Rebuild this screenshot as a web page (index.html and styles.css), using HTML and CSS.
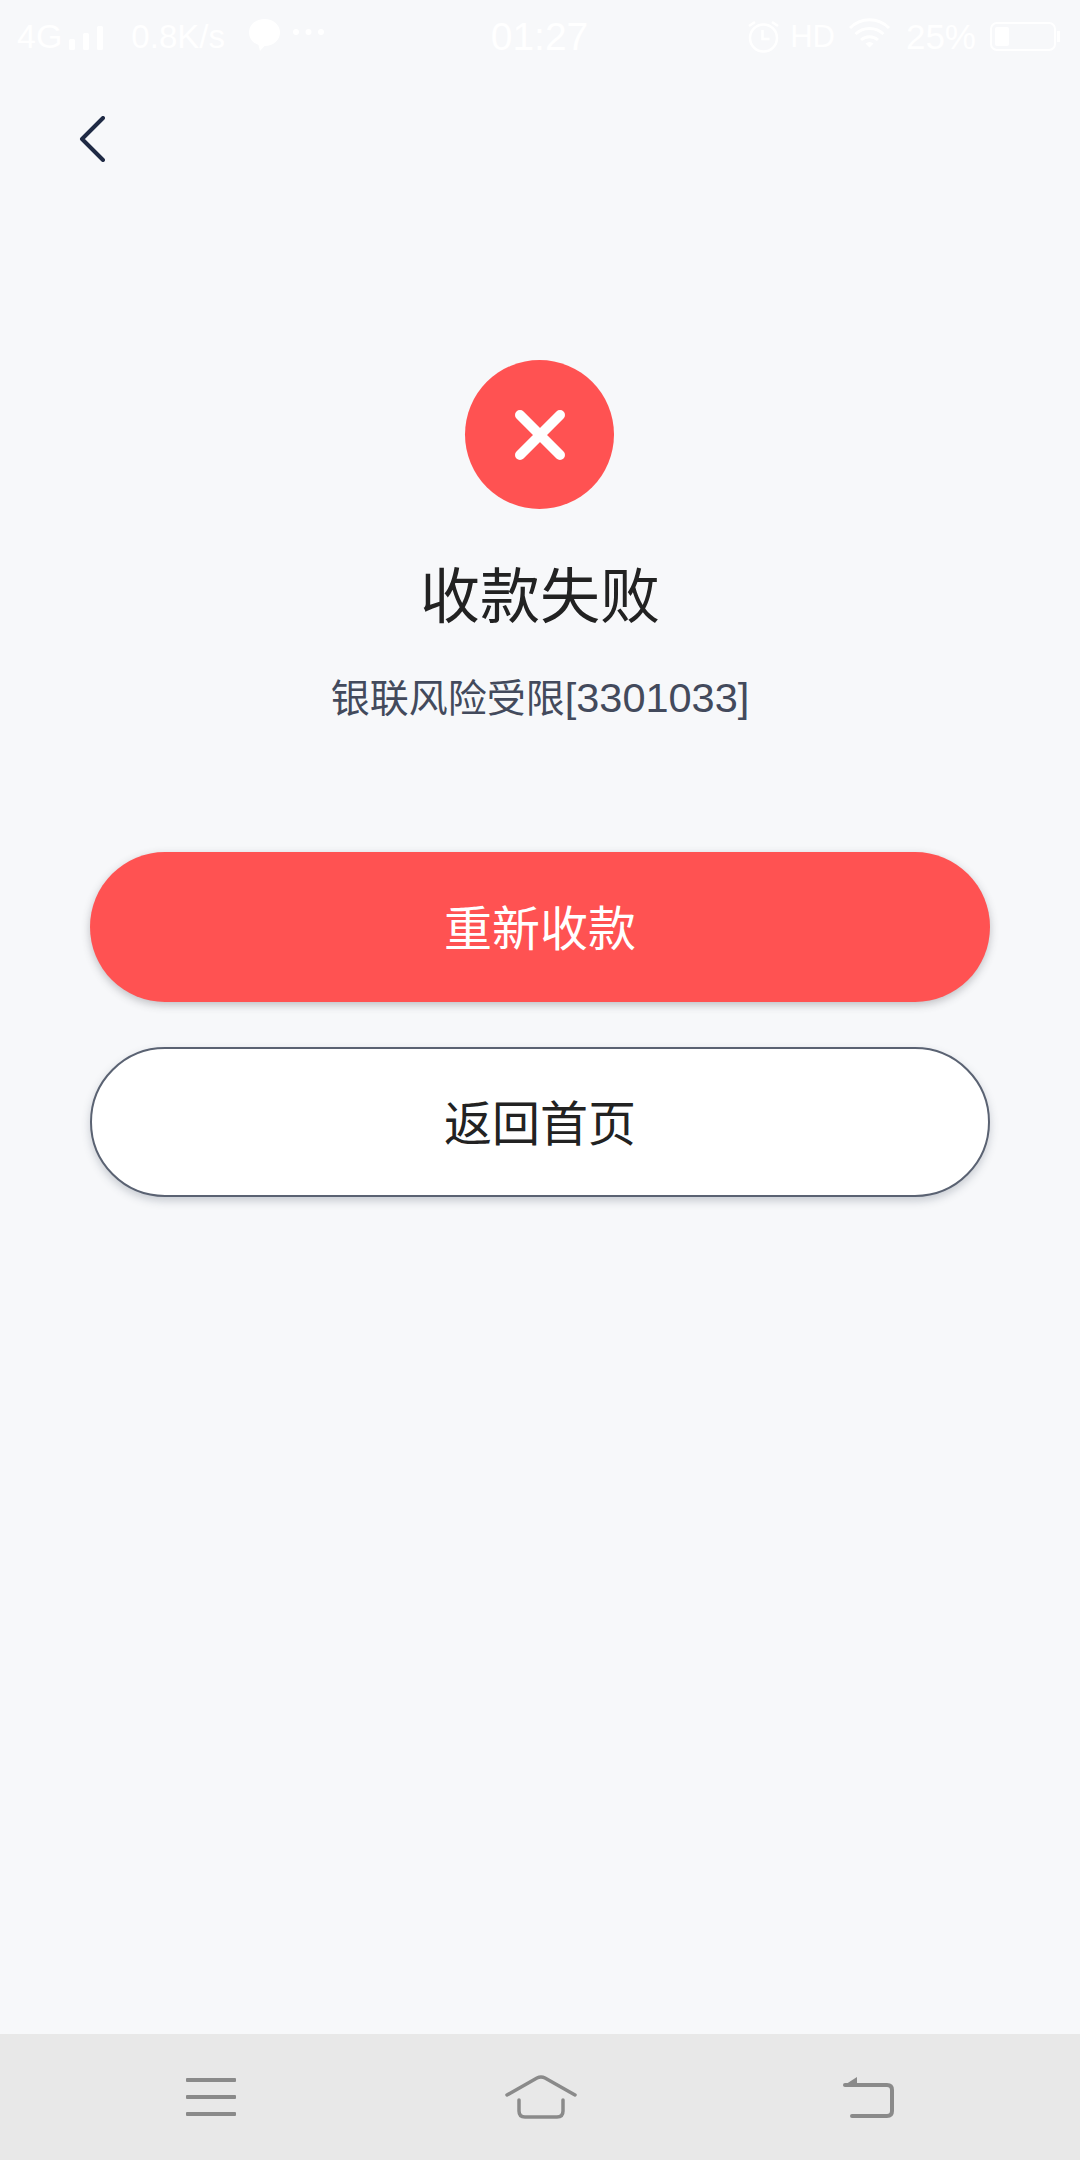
FILE: index.html
```html
<!DOCTYPE html>
<html lang="zh-CN">
<head>
  <meta charset="UTF-8">
  <meta name="viewport" content="width=device-width, initial-scale=1">
  <title>收款失败</title>
  <link rel="stylesheet" href="styles.css">
</head>
<body>
  <div class="page">
    <!-- status bar: white on a pale page, barely visible in the original too -->
    <div class="status-bar">
      <div class="status-left">
        <span class="net">4G</span>
        <svg class="signal" width="36" height="26" viewBox="0 0 36 26" fill="#fff"><rect x="1" y="14" width="6" height="11" rx="1.500"/><rect x="15" y="8" width="6" height="17" rx="1.500"/><rect x="29" y="1" width="6" height="24" rx="1.500"/></svg>
        <span class="speed">0.8K/s</span>
        <svg class="bubble" width="33" height="34" viewBox="0 0 33 34" fill="#fff"><path d="M16.500 1C25.500 1 32 7 32 14.500C32 22 25.500 28 16.500 28L12 33L10.500 27C4.500 25 1 20 1 14.500C1 7 7.500 1 16.500 1Z"/></svg>
        <svg class="dots" width="33" height="8" viewBox="0 0 33 8" fill="#fff"><circle cx="4" cy="4" r="3"/><circle cx="16.500" cy="4" r="3"/><circle cx="29" cy="4" r="3"/></svg>
      </div>
      <span class="clock">01:27</span>
      <div class="status-right">
        <svg class="alarm" width="33" height="33" viewBox="0 0 33 33" fill="none" stroke="#fff" stroke-width="2.500"><circle cx="16.500" cy="18" r="13.500"/><path d="M15.500 10v9h7M2 6l6-4M31 6l-6-4"/></svg>
        <span class="hd">HD</span>
        <svg class="wifi" width="43" height="32" viewBox="0 0 43 32" fill="none" stroke="#fff" stroke-width="3"><path d="M2 12C13 1 30 1 41 12M7.500 18C15 10.500 28 10.500 35.500 18M13 24C18 19.500 25 19.500 30 24"/><path d="M17.500 27.500L21.500 31.500L25.500 27.500C23 25.500 20 25.500 17.500 27.500Z" fill="#fff" stroke="none"/></svg>
        <span class="battery-pct">25%</span>
        <div class="battery">
          <div class="battery-level"></div>
        </div>
      </div>
    </div>

    <div class="nav">
      <svg class="back" width="26" height="46" viewBox="0 0 26 46" fill="none" stroke="#1f2a44" stroke-width="4" stroke-linecap="round" stroke-linejoin="round"><path d="M24 2L3 23L24 44"/></svg>
    </div>

    <div class="result">
      <div class="result-icon">
        <svg width="50" height="50" viewBox="0 0 50 50" fill="none" stroke="#fff" stroke-width="10" stroke-linecap="round"><path d="M5 5L45 45M45 5L5 45"/></svg>
      </div>
      <h1 class="result-title">收款失败</h1>
      <p class="result-reason">银联风险受限<span class="reason-code">[3301033]</span></p>
    </div>

    <div class="actions">
      <button class="btn btn-primary">重新收款</button>
      <button class="btn btn-outline">返回首页</button>
    </div>

    <div class="nav-bar">
      <svg width="52" height="40" viewBox="0 0 52 40" fill="#8a8a8a"><rect x="1" y="1" width="50" height="4" rx="1"/><rect x="1" y="18" width="50" height="4" rx="1"/><rect x="1" y="35" width="50" height="4" rx="1"/></svg>
      <svg class="nav-home" width="72" height="44" viewBox="0 0 72 44" fill="none" stroke="#8a8a8a" stroke-width="3.500" stroke-linecap="round" stroke-linejoin="round"><path d="M2 20L32 3Q36 1 40 3L70 20"/><path d="M14 25V36Q14 42 20 42H52Q58 42 58 36V25"/></svg>
      <svg class="nav-back" width="52" height="42" viewBox="0 0 52 42" fill="none" stroke="#8a8a8a" stroke-width="4" stroke-linecap="round" stroke-linejoin="round"><path d="M3 9H45Q50 9 50 14V35Q50 40 45 40H10"/><path d="M1 10L15 1V10Z" fill="#8a8a8a" stroke="none"/></svg>
    </div>
  </div>
</body>
</html>
```

FILE: styles.css
```css
html, body {
  margin: 0; padding: 0;
  background: #f7f8fa;
  font-family: "Liberation Sans", "Noto Sans CJK SC", sans-serif;
  color: #222;
}
.page {
  display: flex;
  flex-direction: column;
  height: 2160px;
  overflow: hidden;
}
.status-bar {
  display: flex;
  align-items: center;
  justify-content: space-between;
  height: 72px;
  padding: 0 18px 0 17px;
  color: #fff;
  font-size: 33px;
  line-height: 1;
}
.status-bar svg { display: block; }
.status-left, .status-right {
  display: flex;
  align-items: center;
  width: 340px;
}
.status-right { justify-content: flex-end; }
.net { font-size: 34px; }
.signal { margin: 4px 0 0 6px; }
.speed { margin-left: 27px; }
.bubble { margin: -2px 0 0 23px; }
.dots { margin: -8px 0 0 11px; }
.alarm { margin-right: 10px; }
.hd { font-size: 31px; margin-right: 13px; }
.wifi { margin: -8px 15px 0 0; }
.battery-pct { font-size: 35px; margin-right: 14px; }
.clock { font-size: 39px; }
.battery {
  position: relative;
  width: 66px; height: 29px;
  box-sizing: border-box;
  border: 2px solid #fff;
  border-radius: 7px;
  padding: 3px;
  margin-right: 6px;
}
.battery::after {
  content: "";
  position: absolute;
  right: -6px; top: 7px;
  width: 3px; height: 11px;
  background: #fff;
}
.battery-level {
  width: 14px; height: 100%;
  background: #fff;
  border-radius: 2px;
}
.nav {
  height: 212px;
  padding: 44px 0 0 79px;
  box-sizing: border-box;
}
.back { display: block; }
.result {
  display: flex;
  flex-direction: column;
  align-items: center;
  margin-top: 76px;
}
.result-icon {
  display: flex;
  align-items: center;
  justify-content: center;
  width: 149px; height: 149px;
  border-radius: 50%;
  background: #ff5252;
  margin-left: -1px;
}
.result-title {
  margin: 54px 0 0;
  font-size: 60px;
  line-height: 70px;
  font-weight: 400;
  color: #222;
}
.result-reason {
  margin: 37px 0 0;
  font-size: 39px;
  line-height: 56px;
  color: #434a5c;
}
.reason-code { font-size: 41.500px; }
.actions {
  display: flex;
  flex-direction: column;
  gap: 45px;
  margin: 125px 90px 0;
}
.btn {
  height: 150px;
  border-radius: 75px;
  font-family: inherit;
  font-size: 48px;
  padding: 0 0 4px;
}
.btn-primary {
  background: #ff5252;
  border: 0;
  color: #fff;
  box-shadow: 0 3px 8px rgba(60, 60, 70, 0.3);
}
.btn-outline {
  background: #fff;
  border: 2px solid #5a6272;
  color: #222;
  box-shadow: 0 4px 8px rgba(60, 70, 90, 0.25);
}
.nav-bar {
  display: flex;
  align-items: center;
  justify-content: space-between;
  margin-top: auto;
  height: 126px;
  background: #e8e8e8;
  padding: 0 185px;
}
.nav-home { margin-left: 3px; }
.nav-back { margin-right: 1px; }
```
